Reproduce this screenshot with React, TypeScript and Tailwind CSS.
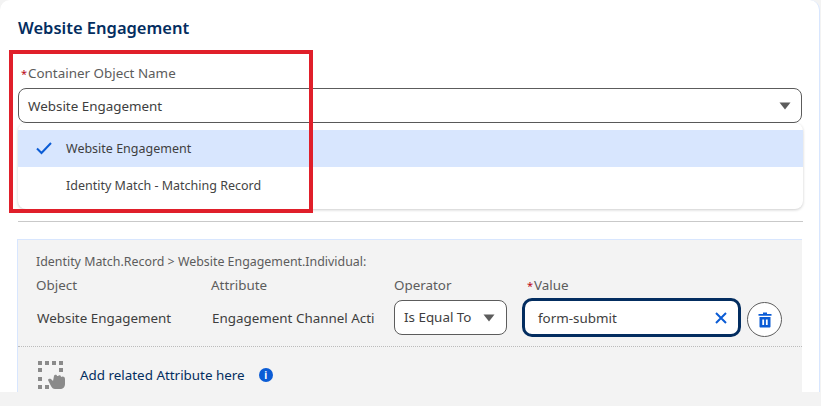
const font = { fontFamily: '"Noto Sans", "Open Sans", sans-serif' };

const Caret = () => (
  <svg width="12" height="8" viewBox="0 0 12 8" className="fill-[#5c5c5c]">
    <path d="M0.5 0.5h11L6 7.5z" />
  </svg>
);

const HandIcon = () => (
  <svg width="28" height="28" viewBox="0 0 28 28" className="fill-[#8a8a8a]">
    <rect x="0" y="0" width="4" height="4" />
    <rect x="7" y="0" width="4" height="4" />
    <rect x="14" y="0" width="4" height="4" />
    <rect x="21" y="0" width="4" height="4" />
    <rect x="0" y="7" width="4" height="4" />
    <rect x="21" y="7" width="4" height="4" />
    <rect x="0" y="16" width="4" height="4" />
    <rect x="0" y="24" width="4" height="4" />
    <rect x="7" y="24" width="4" height="4" />
    <path d="M10 19c1-2 3-1 4 0l1 1 1-5c1-2 3-1 3 0l1 0c1-1 3-1 3 1 1-1 4-1 4 2v5c0 3-2 5-5 5h-5c-2 0-3-1-4-3z" />
  </svg>
);

const TrashIcon = () => (
  <svg width="14" height="16" viewBox="0 0 14 16" className="fill-[#0b5cd5]">
    <path d="M5 0.5h4v1.500h4.500v1.800H.5V2H5zM1.500 5h11v9.500c0 .6-.5 1-1 1h-9c-.5 0-1-.4-1-1zM4.300 7.500v5.500h1.800V7.500zM7.900 7.500v5.500h1.800V7.500z" />
  </svg>
);

export default function App() {
  return (
    <div style={font} className="relative h-[406px] w-[821px] overflow-hidden bg-[#f3f3f3] text-[13.4px] text-[#444]">
      <div className="h-[392px] w-[820px] rounded-tl-[10px] rounded-tr-[10px] border-r border-[#d8e6fe] bg-white pl-[18px] pr-[17px]">
        <h2 className="pt-[16px] text-[16.5px] font-semibold leading-[24px] text-[#032d60]">Website Engagement</h2>

        <div className="mt-[24px] pl-[3px] leading-[18px] text-[#5c5c5c]">
          <span className="mr-[1px] inline-block w-[6px] text-[11px] leading-none text-[#ba0517]">*</span>Container Object Name
        </div>
        <div className="mt-[6px] flex h-[35px] w-[784px] items-center justify-between rounded-[8px] border border-[#5c5c5c] bg-white pl-[9px] pr-[10px] text-[#3e3e3e]">
          <span className="pt-[1px]">Website Engagement</span>
          <Caret />
        </div>

        <div className="h-[86px] w-[785px] rounded-[8px] bg-white pt-[7px] shadow-[0_1px_3px_rgba(0,0,0,0.2)]">
          <div className="flex h-[37px] items-center bg-[#d8e6fe]">
            <svg width="16" height="13" viewBox="0 0 16 13" className="ml-[18px] mr-[14px] fill-none stroke-[#0b5cd5] stroke-2">
              <path d="M1 6.500l4.500 4.500L15 1" />
            </svg>
            <span className="pt-[1px] text-[12.5px] text-[#3e3e3e]">Website Engagement</span>
          </div>
          <div className="flex h-[38px] items-center pl-[48px] pt-[1px] text-[12.5px] text-[#444]">Identity Match - Matching Record</div>
        </div>

        <div className="mt-[12px] h-px w-[785px] bg-[#c9c9c9]" />

        <div className="-ml-px mt-[17px] h-[153px] w-[785px] border-l border-t border-[#d8e6fe] bg-[#f3f3f3]">
          <div className="flex h-[107px] flex-col border-b border-dotted border-[#bbb] pl-[18px]">
            <div className="pt-[14px] text-[12.4px] leading-[16px] text-[#5c5c5c]">Identity Match.Record &gt; Website Engagement.Individual:</div>
            <div className="mt-[5px] flex">
              <div className="w-[175px]">
                <div className="leading-[20px] text-[#5c5c5c]">Object</div>
                <div className="mt-[13px] pl-[1px] leading-[20px] text-[#3e3e3e]">Website Engagement</div>
              </div>
              <div className="w-[183px]">
                <div className="leading-[20px] text-[#5c5c5c]">Attribute</div>
                <div className="mt-[13px] pl-[1px] leading-[20px] text-[#3e3e3e]">Engagement Channel Acti</div>
              </div>
              <div className="w-[128px]">
                <div className="leading-[20px] text-[#5c5c5c]">Operator</div>
                <div className="mt-[5px] flex h-[35px] w-[113px] items-center justify-between rounded-[8px] border border-[#5c5c5c] bg-white pl-[9px] pr-[11px] text-[#3e3e3e]">
                  <span>Is Equal To</span>
                  <Caret />
                </div>
              </div>
              <div>
                <div className="pl-[5px] leading-[20px] text-[#5c5c5c]">
                  <span className="mr-[1px] inline-block w-[6px] text-[11px] leading-none text-[#ba0517]">*</span>Value
                </div>
                <div className="mt-[3px] flex items-center gap-[6px]">
                  <div className="flex h-[39px] w-[219px] items-center justify-between rounded-[10px] border-[3px] border-[#032d60] bg-white pl-[13px] pr-[11px] text-[#3e3e3e]">
                    <span className="pt-[1px]">form-submit</span>
                    <svg width="12" height="12" viewBox="0 0 12 12" className="fill-none stroke-[#0b5cd5] stroke-2">
                      <path d="M1 1l10 10M11 1L1 11" />
                    </svg>
                  </div>
                  <div className="mt-[4px] flex h-[35px] w-[35px] items-center justify-center rounded-full border border-[#5c5c5c] bg-white">
                    <TrashIcon />
                  </div>
                </div>
              </div>
            </div>
          </div>
          <div className="mt-[14px] flex items-center pl-[20px]">
            <HandIcon />
            <span className="ml-[14px] text-[#032d60]">Add related Attribute here</span>
            <span className="ml-[14px] flex h-[14px] w-[14px] items-center justify-center rounded-full bg-[#0b5cd5] text-[10px] font-bold leading-none text-white">i</span>
          </div>
        </div>
      </div>

      {/* red annotation box drawn over the screenshot */}
      <div className="absolute left-[9px] top-[50px] h-[163px] w-[304px] border-[4px] border-[#e01f2a]" />
    </div>
  );
}
